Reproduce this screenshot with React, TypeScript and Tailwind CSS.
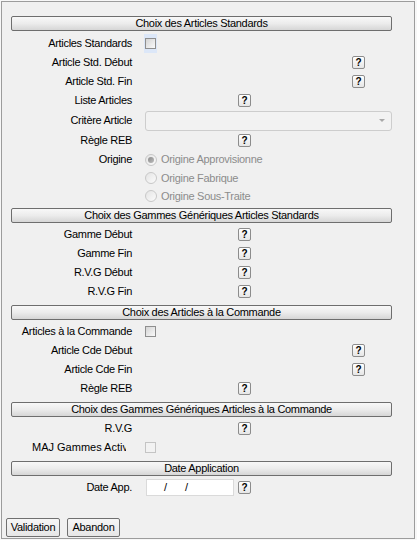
const font = { fontFamily: '"Liberation Sans", Arial, sans-serif' }

function Header({ title, className = '' }: { title: string; className?: string }) {
  return (
    <div
      className={`ml-[9px] w-[381px] h-[15px] shrink-0 rounded-[2px] border border-[#6e6e6e] bg-gradient-to-b from-[#f8f8f8] via-[#ececec] to-[#d6d6d6] flex items-center justify-center text-[11px] leading-none tracking-[-0.3px] text-black ${className}`}
    >
      {title}
    </div>
  )
}

function Help({ className = '' }: { className?: string }) {
  return (
    <div
      className={`w-[13px] h-[13px] shrink-0 rounded-[2px] border border-[#8c8c8c] bg-gradient-to-b from-white to-[#e6e6e6] flex items-center justify-center text-[10px] font-bold leading-none text-black ${className}`}
    >
      ?
    </div>
  )
}

function Label({ text }: { text: string }) {
  return (
    <div className="w-[130px] shrink-0 text-right whitespace-nowrap text-[11px] leading-none tracking-[-0.3px] text-black">
      {text}
    </div>
  )
}

function Row({ children, className = 'h-[19px]' }: { children: React.ReactNode; className?: string }) {
  return <div className={`flex items-center shrink-0 ${className}`}>{children}</div>
}

function Checkbox({ focus = false, disabled = false }: { focus?: boolean; disabled?: boolean }) {
  return (
    <div className={`ml-[12px] w-[13px] h-[19px] flex items-center justify-center ${focus ? 'bg-[#dce7f8]' : ''}`}>
      <div
        className={`w-[11px] h-[11px] border ${
          disabled ? 'border-[#c4c4c4] bg-[#f2f2f2]' : 'border-[#8e8e8e] bg-gradient-to-br from-[#d4d4d4] to-[#fafafa]'
        }`}
      />
    </div>
  )
}

function Radio({ label, checked = false }: { label: string; checked?: boolean }) {
  return (
    <div className="ml-[13px] flex items-center gap-[4px]">
      <div className="w-[12px] h-[12px] rounded-full border border-[#c8c8c8] bg-gradient-to-br from-[#e4e4e4] to-[#fbfbfb] flex items-center justify-center">
        {checked && <div className="w-[6px] h-[6px] rounded-full bg-gradient-to-br from-[#8a8a8a] to-[#bcbcbc]" />}
      </div>
      <span className="text-[11px] leading-none tracking-[-0.3px] text-[#8c8c8c] whitespace-nowrap">{label}</span>
    </div>
  )
}

export default function App() {
  return (
    <div className="w-[417px] h-[540px] bg-[#f7f7f7] p-[1px] overflow-hidden" style={font}>
      <div className="w-[414px] h-[538px] border border-[#9c9c9c] bg-[#f0f0f0] flex flex-col">
        <Header title="Choix des Articles Standards" className="mt-[14px]" />

        <div className="mt-[3px] flex flex-col">
          <Row>
            <Label text="Articles Standards" />
            <Checkbox focus />
          </Row>
          <Row>
            <Label text="Article Std. Début" />
            <Help className="ml-[220px]" />
          </Row>
          <Row>
            <Label text="Article Std. Fin" />
            <Help className="ml-[220px]" />
          </Row>
          <Row>
            <Label text="Liste Articles" />
            <Help className="ml-[106px]" />
          </Row>
          <Row className="h-[21px]">
            <Label text="Critère Article" />
            <div className="ml-[13px] w-[247px] h-[20px] rounded-[3px] border border-[#cdcdcd] bg-[#f2f2f2] flex items-center justify-end pr-[6px]">
              <div className="w-0 h-0 border-l-[3px] border-r-[3px] border-t-[3px] border-l-transparent border-r-transparent border-t-[#a8a8a8]" />
            </div>
          </Row>
          <Row>
            <Label text="Règle REB" />
            <Help className="ml-[106px]" />
          </Row>
          <Row>
            <Label text="Origine" />
            <Radio label="Origine Approvisionne" checked />
          </Row>
          <Row className="h-[18px]">
            <Label text="" />
            <Radio label="Origine Fabrique" />
          </Row>
          <Row className="h-[18px]">
            <Label text="" />
            <Radio label="Origine Sous-Traite" />
          </Row>
        </div>

        <Header title="Choix des Gammes Génériques Articles Standards" className="mt-[3px]" />

        <div className="mt-[2px] flex flex-col">
          <Row>
            <Label text="Gamme Début" />
            <Help className="ml-[106px]" />
          </Row>
          <Row>
            <Label text="Gamme Fin" />
            <Help className="ml-[106px]" />
          </Row>
          <Row>
            <Label text="R.V.G Début" />
            <Help className="ml-[106px]" />
          </Row>
          <Row>
            <Label text="R.V.G Fin" />
            <Help className="ml-[106px]" />
          </Row>
        </div>

        <Header title="Choix des Articles à la Commande" className="mt-[4px]" />

        <div className="mt-[2px] flex flex-col">
          <Row>
            <Label text="Articles à la Commande" />
            <Checkbox />
          </Row>
          <Row>
            <Label text="Article Cde Début" />
            <Help className="ml-[220px]" />
          </Row>
          <Row>
            <Label text="Article Cde Fin" />
            <Help className="ml-[220px]" />
          </Row>
          <Row>
            <Label text="Règle REB" />
            <Help className="ml-[106px]" />
          </Row>
        </div>

        <Header title="Choix des Gammes Génériques Articles à la Commande" className="mt-[4px]" />

        <div className="mt-[2px] flex flex-col">
          <Row>
            <Label text="R.V.G" />
            <Help className="ml-[106px]" />
          </Row>
          <Row>
            {/* label is clipped in the original form */}
            <div className="w-[130px] shrink-0 flex justify-end">
              <span className="w-[94px] mr-[6px] overflow-hidden whitespace-nowrap text-[11px] leading-none text-black">
                MAJ Gammes Active
              </span>
            </div>
            <Checkbox disabled />
          </Row>
        </div>

        <Header title="Date Application" className="mt-[4px]" />

        <div className="mt-[2px] flex flex-col">
          <Row>
            <Label text="Date App." />
            <div className="ml-[14px] w-[88px] h-[17px] border border-[#dadada] bg-white flex items-center text-[11px] leading-none text-black">
              <span className="ml-[17px]">/</span>
              <span className="ml-[18px]">/</span>
            </div>
            <Help className="ml-[4px]" />
          </Row>
        </div>

        <div className="mt-[21px] ml-[4px] flex gap-[7px]">
          <button className="w-[54px] h-[19px] rounded-[2px] border border-[#707070] bg-gradient-to-b from-[#f6f6f6] to-[#e6e6e6] text-[11px] leading-none tracking-[-0.3px] text-black">
            Validation
          </button>
          <button className="w-[53px] h-[19px] rounded-[2px] border border-[#707070] bg-gradient-to-b from-[#f6f6f6] to-[#e6e6e6] text-[11px] leading-none tracking-[-0.3px] text-black">
            Abandon
          </button>
        </div>
      </div>
    </div>
  )
}
